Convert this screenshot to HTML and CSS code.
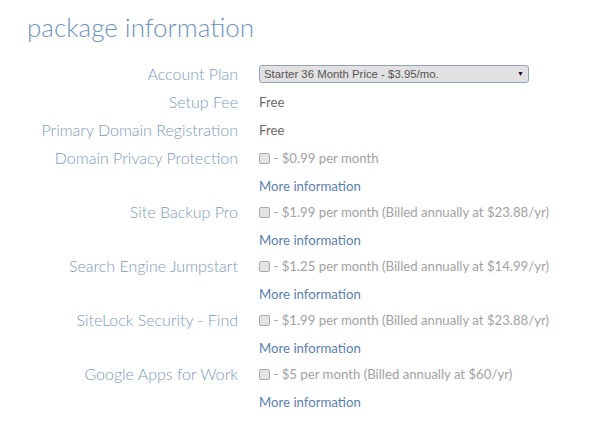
FILE: index.html
```html
<!DOCTYPE html>
<html>
<head>
    <meta charset="UTF-8">
    <title>package information</title>
    <link rel="stylesheet" href="styles.css">
</head>
<body>
<div class="box">
    <h2 class="title">package information</h2>
    <div class="form">
        <div class="row">
            <label class="label">Account Plan</label>
            <div class="value">
                <div class="select">
                    <span>Starter 36 Month Price - $3.95/mo.</span>
                    <span class="arrow">&#9660;</span>
                </div>
            </div>
        </div>
        <div class="row">
            <label class="label">Setup Fee</label>
            <div class="value free">Free</div>
        </div>
        <div class="row">
            <label class="label">Primary Domain Registration</label>
            <div class="value free">Free</div>
        </div>
        <div class="row">
            <label class="label">Domain Privacy Protection</label>
            <div class="value">
                <p class="price"><i class="check"></i> - $0.99 per month</p>
                <a class="more" href="#">More information</a>
            </div>
        </div>
        <div class="row">
            <label class="label">Site Backup Pro</label>
            <div class="value">
                <p class="price"><i class="check"></i> - $1.99 per month (Billed annually at $23.88/yr)</p>
                <a class="more" href="#">More information</a>
            </div>
        </div>
        <div class="row">
            <label class="label">Search Engine Jumpstart</label>
            <div class="value">
                <p class="price"><i class="check"></i> - $1.25 per month (Billed annually at $14.99/yr)</p>
                <a class="more" href="#">More information</a>
            </div>
        </div>
        <div class="row">
            <label class="label">SiteLock Security - Find</label>
            <div class="value">
                <p class="price"><i class="check"></i> - $1.99 per month (Billed annually at $23.88/yr)</p>
                <a class="more" href="#">More information</a>
            </div>
        </div>
        <div class="row">
            <label class="label">Google Apps for Work</label>
            <div class="value">
                <p class="price"><i class="check"></i> - $5 per month (Billed annually at $60/yr)</p>
                <a class="more" href="#">More information</a>
            </div>
        </div>
    </div>
</div>
</body>
</html>
```

FILE: styles.css
```css
* {
    padding: 0;
    margin: 0;
}

body {
    background: #fff;
    font-family: Lato, "Open Sans", sans-serif;
}

.box {
    width: 600px;
    padding-top: 8px;
}

.title {
    font-size: 26px;
    font-weight: 300;
    color: #6f93bb;
    padding-left: 27px;
    line-height: 38px;
}

.form {
    padding-top: 14px;
}

.row {
    display: flex;
    gap: 21px;
    align-items: flex-start;
}

.label {
    width: 238px;
    text-align: right;
    font-size: 16px;
    font-weight: 300;
    color: #7e9ab8;
    line-height: 28px;
}

.value {
    flex: 1;
    font-size: 13.2px;
    line-height: 28px;
}

.free {
    color: #6a6a6a;
}

.select {
    width: 260px;
    height: 16px;
    margin-top: 5px;
    margin-bottom: 5px;
    border: 1px solid #8fa5bd;
    border-radius: 3px;
    background: #e1e1e1;
    display: flex;
    justify-content: space-between;
    align-items: center;
    padding: 0 4px;
    font-family: "Liberation Sans", Arial, sans-serif;
    font-size: 11.4px;
    color: #555;
}

.arrow {
    font-size: 7px;
    color: #111;
}

.price {
    color: #a2a2a2;
    line-height: 28px;
}

.check {
    display: inline-block;
    width: 9px;
    height: 9px;
    border: 1px solid #aaa;
    border-radius: 2px;
    background: #e4e4e4;
    vertical-align: -1px;
}

.more {
    display: block;
    color: #5b80ad;
    text-decoration: none;
    padding-top: 3px;
    line-height: 23px;
}
```
